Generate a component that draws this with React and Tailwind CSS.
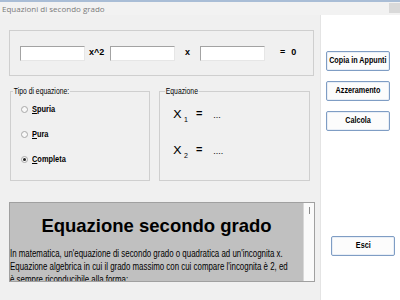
import React from "react";

const ui = "font-['Liberation_Sans',Arial,sans-serif]";

function Field({ className = "" }) {
  return (
    <div
      className={`h-[15px] w-[65px] border border-t-[#a3a3a3] border-l-[#a3a3a3] border-b-[#e6e6e6] border-r-[#e6e6e6] bg-white ${className}`}
    />
  );
}

function Radio({ label, checked }) {
  return (
    <div className="flex h-[10px] items-center">
      <span className="flex h-[7px] w-[7px] items-center justify-center rounded-full border border-[#a8a8a8] bg-[#f8f8f8]">
        {checked && <span className="h-[3px] w-[3px] rounded-full bg-[#222]" />}
      </span>
      <span className="ml-[4px] inline-block origin-left scale-x-[0.78] text-[9.5px] font-bold leading-none text-black">
        <u>{label[0]}</u>
        {label.slice(1)}
      </span>
    </div>
  );
}

function Btn({ children, className = "" }) {
  return (
    <button
      className={`flex h-[20px] w-[64px] items-center justify-center rounded-[2px] border border-[#7f9dc4] bg-[#fcfcfc] shadow-[inset_0_0_0_1px_#e8eef6] ${className}`}
    >
      <span className="inline-block scale-x-[0.8] whitespace-nowrap text-[9px] font-bold text-black">
        {children}
      </span>
    </button>
  );
}

function Root({ n, dots }) {
  return (
    <div className="flex items-end">
      <span className="inline-block w-[10px] origin-left scale-x-[1.15] font-['DejaVu_Sans',sans-serif] text-[11px] leading-none text-black">
        X
      </span>
      <span className="mb-[-3px] ml-[1px] text-[7px] leading-none text-black">{n}</span>
      <span className="ml-[8px] mb-[1px] text-[11px] font-bold leading-none text-black">=</span>
      <span className="ml-[11px] text-[9px] leading-none text-black">{dots}</span>
    </div>
  );
}

export default function App() {
  return (
    <div className={`flex h-[300px] w-[400px] flex-col overflow-hidden bg-[#f0f0f0] ${ui}`}>
      {/* title bar */}
      <div className="flex h-[15px] items-start justify-between border-t-2 border-[#a9bdd6] bg-[#f2f2f2]">
        <span className="mt-[2px] ml-[2px] font-['Open_Sans',sans-serif] text-[8px] leading-[10px] text-[#7a7a7a]">
          Equazioni di secondo grado
        </span>
        <span className="mt-[1px] h-[10px] w-[11px] bg-[#d9d9d9]" />
      </div>

      <div className="flex flex-1">
        {/* left form */}
        <div className="flex w-[321px] flex-col border-r border-[#e4e4e4] pl-[9px]">
          <div className="mt-[15px] flex h-[46px] w-[305px] items-center border border-[#cfcfcf] pl-[10px] text-[9px] font-bold">
            <Field />
            <span className="ml-[4px] w-[16px]">x^2</span>
            <Field className="ml-[5px]" />
            <span className="ml-[10px] w-[6px]">x</span>
            <Field className="ml-[9px]" />
            <span className="ml-[15px]">=</span>
            <span className="ml-[6px]">0</span>
          </div>

          <div className="mt-[15px] flex">
            <div className="relative ml-[1px] h-[90px] w-[140px] border border-[#cfcfcf]">
              <span className="absolute -top-[6px] left-[2px] origin-left scale-x-[0.8] whitespace-nowrap bg-[#f0f0f0] px-[1px] text-[8.5px] leading-[10px] text-black">
                Tipo di equazione:
              </span>
              <div className="flex flex-col gap-[15px] pt-[12px] pl-[10px]">
                <Radio label="Spuria" />
                <Radio label="Pura" />
                <Radio label="Completa" checked />
              </div>
            </div>

            <div className="relative ml-[9px] h-[90px] w-[151px] border border-[#cfcfcf]">
              <span className="absolute -top-[6px] left-[5px] origin-left scale-x-[0.8] whitespace-nowrap bg-[#f0f0f0] px-[1px] text-[8.5px] leading-[10px] text-black">
                Equazione
              </span>
              <div className="flex flex-col gap-[24px] pt-[16px] pl-[13px]">
                <Root n="1" dots="..." />
                <Root n="2" dots="...." />
              </div>
            </div>
          </div>

          <div className="mt-[21px] flex h-[80px] w-[306px] border border-[#a0a0a0]">
            <div className="w-[293px] overflow-hidden bg-[#c0c0c0] text-black">
              <div className="flex h-[45px] items-center justify-center text-[18.5px] font-bold">
                Equazione secondo grado
              </div>
              <p className="-mt-[1px] w-[370px] origin-left scale-x-[0.79] text-[10px] leading-[13px]">
                In matematica, un'equazione di secondo grado o quadratica ad un'incognita x.
                <br />
                Equazione algebrica in cui il grado massimo con cui compare l'incognita è 2, ed
                <br />
                è sempre riconducibile alla forma:
              </p>
            </div>
            <div className="flex flex-1 justify-center border-l border-[#d8d8d8] bg-[#fafafa] pt-[4px]">
              <span className="h-[7px] w-[1px] bg-[#8a8a8a]" />
            </div>
          </div>
        </div>

        {/* right buttons */}
        <div className="flex flex-1 flex-col bg-white pl-[5px]">
          <div className="mt-[36px] flex flex-col gap-[10px]">
            <Btn>Copia in Appunti</Btn>
            <Btn>Azzeramento</Btn>
            <Btn>Calcola</Btn>
          </div>
          <Btn className="mt-[105px] ml-[5px]">Esci</Btn>
        </div>
      </div>
    </div>
  );
}
